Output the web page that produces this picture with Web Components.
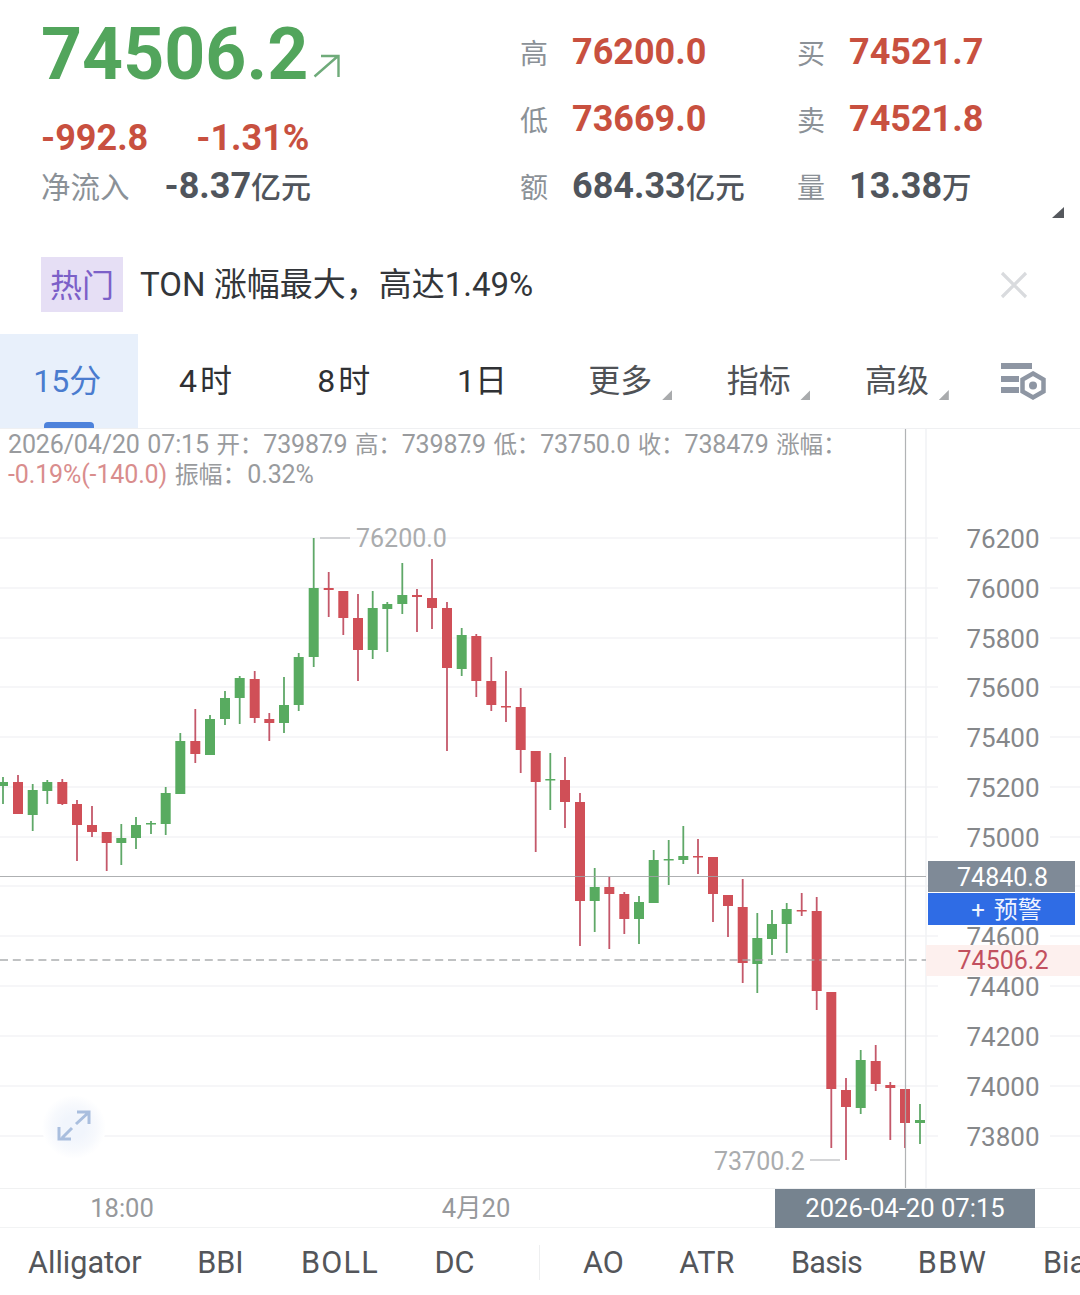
<!DOCTYPE html>
<html lang="zh">
<head>
<meta charset="utf-8">
<title>74506.2</title>
<style>
  html, body { margin: 0; background: #fff; }
  body { width: 1080px; height: 1295px; overflow: hidden; font-family: Roboto, "Noto Sans CJK SC", sans-serif; }
</style>
</head>
<body>
<quote-header></quote-header>
<hot-bar tag="热门">TON 涨幅最大，高达1.49%</hot-bar>
<tab-bar></tab-bar>
<candle-chart></candle-chart>
<time-axis></time-axis>
<indicator-bar></indicator-bar>

<script>
class QuoteStat extends HTMLElement {
  constructor() {
    super();
    this.attachShadow({ mode: 'open' });
  }
  connectedCallback() {
    const unit = this.getAttribute('unit');
    this.shadowRoot.innerHTML = `
      <style>
        :host { display: flex; align-items: center; height: 67px; }
        .label { width: 52px; font-size: 28px; color: #8b9197; }
        .value { font-size: 36px; font-weight: 700; color: var(--tone, #c8503f); }
        .unit { font-size: 29.5px; font-weight: 500; }
        :host([tone="dark"]) { --tone: #50555c; }
      </style>
      <span class="label">${this.getAttribute('label')}</span>
      <span class="value"><slot></slot>${unit ? `<span class="unit">${unit}</span>` : ''}</span>
    `;
  }
}
customElements.define('quote-stat', QuoteStat);

class QuoteHeader extends HTMLElement {
  constructor() {
    super();
    this.attachShadow({ mode: 'open' });
  }
  connectedCallback() {
    this.shadowRoot.innerHTML = `
      <style>
        :host { display: flex; height: 257px; position: relative; }
        .left { width: 520px; padding-left: 41px; box-sizing: border-box; }
        .price { display: flex; align-items: flex-end; height: 106px; box-sizing: border-box; padding-bottom: 16px; }
        .big { font-size: 71.6px; font-weight: 700; line-height: 71px; color: #52a55c; }
        .price svg { margin: 0 0 12px 5px; }
        .change { display: flex; align-items: center; height: 48px; margin-top: 8px; font-size: 36px; font-weight: 700; color: #c8503f; gap: 48px; }
        .flow { display: flex; align-items: center; height: 46px; font-size: 29.5px; color: #8b9197; gap: 35px; }
        .flow b { font-size: 36px; color: #50555c; }
        .flow b span { font-size: 30px; font-weight: 500; }
        .right { display: grid; grid-template-columns: 277px 1fr; align-content: start; padding-top: 18px; }
        .corner { position: absolute; left: 1052px; top: 207px; width: 12px; height: 11px; background: #55585d; clip-path: polygon(100% 0, 100% 100%, 0 100%); }
      </style>
      <div class="left">
        <div class="price">
          <span class="big">74506.2</span>
          <svg width="27" height="24" viewBox="0 0 27 24" fill="none" stroke="#6fab7a" stroke-width="2.4"><path d="M1.5 22.5 25 2M8 2h17.5v21"/></svg>
        </div>
        <div class="change"><span>-992.8</span><span>-1.31%</span></div>
        <div class="flow"><span>净流入</span><b>-8.37<span>亿元</span></b></div>
      </div>
      <div class="right">
        <quote-stat label="高">76200.0</quote-stat>
        <quote-stat label="买">74521.7</quote-stat>
        <quote-stat label="低">73669.0</quote-stat>
        <quote-stat label="卖">74521.8</quote-stat>
        <quote-stat label="额" tone="dark" unit="亿元">684.33</quote-stat>
        <quote-stat label="量" tone="dark" unit="万">13.38</quote-stat>
      </div>
      <i class="corner"></i>
    `;
  }
}
customElements.define('quote-header', QuoteHeader);

class HotBar extends HTMLElement {
  constructor() {
    super();
    this.attachShadow({ mode: 'open' });
  }
  connectedCallback() {
    this.shadowRoot.innerHTML = `
      <style>
        :host { display: flex; height: 77px; padding-left: 41px; box-sizing: border-box; align-items: flex-start; color: #33363a; font-size: 33px; position: relative; }
        .tag { width: 82px; height: 55px; padding-bottom: 4px; box-sizing: border-box; display: flex; align-items: center; justify-content: center; background: #e6dff5; color: #7c60c8; margin-right: 17px; font-size: 32px; }
        .msg { height: 55px; padding-bottom: 5px; box-sizing: border-box; display: flex; align-items: center; white-space: pre; }
        svg { position: absolute; left: 1000px; top: 14px; }
      </style>
      <span class="tag">${this.getAttribute('tag')}</span>
      <span class="msg"><slot></slot></span>
      <svg width="28" height="28" viewBox="0 0 28 28" stroke="#d9dbde" stroke-width="3.2" fill="none"><path d="M2 2l24 24M26 2 2 26"/></svg>
    `;
  }
}
customElements.define('hot-bar', HotBar);

class TabBar extends HTMLElement {
  constructor() {
    super();
    this.attachShadow({ mode: 'open' });
  }
  connectedCallback() {
    const tabs = [['15分'], ['<b>4</b>时'], ['<b>8</b>时'], ['1日'], ['更多', 1], ['指标', 1], ['高级', 1]];
    const items = tabs.map(([name, caret], i) => `
      <div class="tab ${i === 0 ? 'on' : ''} ${caret ? 'more' : ''}"><span>${name}</span>${caret ? '<i></i>' : ''}</div>`).join('');
    this.shadowRoot.innerHTML = `
      <style>
        :host { display: flex; height: 95px; box-sizing: border-box; border-bottom: 1px solid #eff0f2; font-size: 32px; color: #2f3134; }
        .tab { width: 138.3px; height: 94px; display: flex; align-items: center; justify-content: center; position: relative; padding: 0 4px 6px 0; box-sizing: border-box; }
        .tab b { font-weight: 400; margin-right: 3px; }
        .on { background: #e8f0fb; color: #4a7ccf; }
        .on::after { content: ''; position: absolute; left: 44px; bottom: 0; width: 50px; height: 6px; background: #4d82db; border-radius: 4px 4px 0 0; }
        .more { color: #4f5256; }
        .more i { position: absolute; left: 109px; top: 56px; width: 10px; height: 10px; background: #a9abad; clip-path: polygon(100% 0, 100% 100%, 0 100%); }
        svg { margin: 29px 0 0 33px; }
      </style>
      ${items}
      <svg width="46" height="40" viewBox="0 0 46 40" fill="none">
        <path d="M0 3h31M0 16h18M0 27h18" stroke="#8e96a3" stroke-width="6"/>
        <path d="M32 10.5 42.5 16.5v12L32 34.5 21.5 28.5v-12z" stroke="#8e96a3" stroke-width="4.5"/>
        <circle cx="32" cy="22.5" r="4" fill="#8e96a3"/>
      </svg>
    `;
  }
}
customElements.define('tab-bar', TabBar);

// x, wick top, body top, body bottom, wick bottom, up?
const CANDLES = [
  [3,777,782,786,804,1],[18,775,782,814,814,0],[32.7,784,790,815,831,1],[47.3,780,782,791,804,1],
  [62.3,779,782,804,805,0],[77,800,804,825,861,0],[92,806,825,832,837,0],[106.7,832,832,843,871,0],
  [121.3,824,838,843,865,1],[136,817,825,838,849,1],[151,821,823,824.5,834,1],[165.7,787,793,824,835,1],
  [180.3,733,741,794,794,1],[195.3,709,741,754,763,0],[210,715,719,755,755,1],[225,691,698,719,725,1],
  [239.7,676,678,698,724,1],[254.7,671,679,718,723,0],[269.3,713,719,723,741,0],[284,677,705,723,733,1],
  [298.7,653,657,705,711,1],[313.7,538,588,657,667,1],[328.7,572,588,590,617,0],[343.3,591,591,618,635,0],
  [358,594,618,650,681,0],[372.7,591,608,650,659,1],[387.3,602,604,609,652,1],[402.3,563,595,604,614,1],
  [417,589,595,597,632,0],[432,559,598,608,629,0],[447,602,608,668,751,0],[461.7,628,635,669,676,1],
  [476.3,634,636,681,697,0],[491.3,657,681,705,711,0],[506,671,706,707,722,0],[520.7,688,707,750,773,0],
  [535.7,751,751,782,852,0],[550.3,753,779,780,810,1],[565,757,780,802,828,0],[580,793,802,901,946,0],
  [594.7,868,887,901,932,1],[609.3,877,887,894,949,0],[624.3,892,894,919,934,0],[639,896,902,919,944,1],
  [653.7,850,860,903,903,1],[668.7,840,859,860.5,885,1],[683.3,826,856,860,864,1],[698,839,856,857,874,0],
  [713,857,857,894,922,0],[728,895,895,906,937,0],[742.7,879,907,963,983,0],[757.3,913,938,964,993,1],
  [772,910,924,939,955,1],[786.7,903,909,924,953,1],[801.7,893,910,911,916,0],[816.7,897,911,991,1010,0],
  [831.3,992,992,1089,1148,0],[846,1078,1090,1107,1160,0],[860.7,1050,1060,1108,1114,1],[875.7,1045,1061,1084,1091,0],
  [890.3,1082,1085,1088,1140,0],[905,1089,1089,1123,1148,0],[920,1104,1120,1123,1144,1]
];
const AXIS = [[76200,538],[76000,588],[75800,638],[75600,687],[75400,737],[75200,787],[75000,837],[74800,886],[74600,936],[74400,986],[74200,1036],[74000,1086],[73800,1136]];

class CandleChart extends HTMLElement {
  constructor() {
    super();
    this.attachShadow({ mode: 'open' });
  }
  connectedCallback() {
    const grid = AXIS.map(([, y]) => `<path d="M0 ${y}H938M1050 ${y}H1080" stroke="#f3f4f6" stroke-width="1.5"/>`).join('');
    const labels = AXIS.filter(([v]) => v !== 74800).map(([v, y]) => `<text x="1003" y="${y + 10}" text-anchor="middle" class="axis">${v}</text>`).join('');
    const candles = CANDLES.map(([x, wt, bt, bb, wb, up]) => {
      const body = up ? '#58ab60' : '#d04f57';
      const wick = up ? '#5fa868' : '#c4586a';
      return `<path d="M${x} ${wt}V${wb}" stroke="${wick}" stroke-width="1.8"/>
        <rect x="${x - 5}" y="${bt}" width="10" height="${Math.max(bb - bt, 1.5)}" fill="${body}"/>`;
    }).join('');
    this.shadowRoot.innerHTML = `
      <style>
        :host { display: block; height: 759px; position: relative; overflow: hidden; font-size: 25px; color: #999b9e; }
        svg { display: block; }
        .axis { font-size: 26px; fill: #85878a; }
        .mark { font-size: 25px; fill: #aaacae; }
        .legend { position: absolute; left: 8px; top: 1px; width: 900px; line-height: 30px; letter-spacing: -.13px; word-spacing: 1.5px; white-space: nowrap; }
        .legend em { font-style: normal; color: #d98d8d; }
        .legend b { font-weight: 400; font-size: 23.5px; }
        .legend .sub b { font-size: 24px; margin-right: 1px; }
        .legend u { text-decoration: none; letter-spacing: -6px; }
        .tag { position: absolute; display: flex; align-items: center; justify-content: center; font-size: 25px; }
        .cross { left: 928px; top: 432px; width: 147px; height: 31px; padding: 2px 0 0 2px; box-sizing: border-box; background: #7f8a97; color: #fff; }
        .alert { left: 928px; top: 464px; width: 147px; height: 32px; background: #2f6ce5; color: #eef3ff; font-size: 24px; padding: 0 0 4px 10px; box-sizing: border-box; word-spacing: 3px; }
        .last { left: 926px; top: 516px; width: 154px; height: 31px; background: #fdf0ee; color: #c2505f; }
        .expand { position: absolute; left: 42px; top: 666px; width: 64px; height: 64px; border-radius: 50%; background: radial-gradient(closest-side, #f1f5fc 35%, #f7f9fd 70%, #fff 100%); }
      </style>
      <svg width="1080" height="759" viewBox="0 429 1080 759">
        ${grid}
        <path d="M926 429V1188" stroke="#f1f2f4" stroke-width="1.5"/>
        ${candles}
        <path d="M905.5 429V1188" stroke="#a9abad" stroke-opacity=".9" stroke-width="1.2"/>
        <path d="M0 876.5H926" stroke="#a0a2a4" stroke-opacity=".85" stroke-width="1"/>
        <path d="M0 960H926" stroke="#a3a5a7" stroke-opacity=".9" stroke-width="1.5" stroke-dasharray="8 4.8"/>
        <path d="M320 538H350M810 1160H840" stroke="#c6c8ca" stroke-width="1.3"/>
        <text x="356" y="547" class="mark">76200.0</text>
        <text x="714" y="1170" class="mark">73700.2</text>
        ${labels}
      </svg>
      <div class="legend">
        <div>2026/04/20 07:15 <b>开：</b>7398<u>7</u>.9 <b>高：</b>7398<u>7</u>.9 <b>低：</b>73750.0 <b>收：</b>7384<u>7</u>.9 <b>涨幅：</b></div>
        <div class="sub"><em>-0.19%(-140.0)</em> <b>振幅：</b>0.32%</div>
      </div>
      <span class="tag cross">74840.8</span>
      <span class="tag alert">+ 预警</span>
      <span class="tag last">74506.2</span>
      <div class="expand">
        <svg width="64" height="64" viewBox="0 0 64 64" fill="none" stroke="#a9bede" stroke-width="3"><path d="M20 43 30 33M34 29 46 18M35 17h12v12M17 32v12h12"/></svg>
      </div>
    `;
  }
}
customElements.define('candle-chart', CandleChart);

class TimeAxis extends HTMLElement {
  constructor() {
    super();
    this.attachShadow({ mode: 'open' });
  }
  connectedCallback() {
    this.shadowRoot.innerHTML = `
      <style>
        :host { display: block; height: 40px; position: relative; box-sizing: border-box; border-top: 1.5px solid #f0f1f2; border-bottom: 1.5px solid #f2f3f4; font-size: 25.6px; color: #97999c; line-height: 39px; }
        span { position: absolute; top: 0; transform: translateX(-50%); white-space: nowrap; }
        .now { left: 775px; top: 0; width: 260px; height: 39px; transform: none; background: #76838f; color: #fff; text-align: center; }
      </style>
      <span style="left:122px">18:00</span>
      <span style="left:476px">4月20</span>
      <span class="now">2026-04-20 07:15</span>
    `;
  }
}
customElements.define('time-axis', TimeAxis);

class IndicatorBar extends HTMLElement {
  constructor() {
    super();
    this.attachShadow({ mode: 'open' });
  }
  connectedCallback() {
    this.shadowRoot.innerHTML = `
      <style>
        :host { display: flex; align-items: center; height: 67px; padding: 2px 0 0 28px; box-sizing: border-box; overflow: hidden; font-size: 30.6px; color: #54565a; white-space: nowrap; gap: 55.5px; }
        i { width: 1.5px; height: 35px; background: #eeeff0; margin: 0 -13px 0 9px; flex: none; }
        .boll { letter-spacing: 1.2px; margin-left: 2px; }
        .basis { letter-spacing: -.7px; margin-left: 1px; }
        .bbw { letter-spacing: 1.5px; }
      </style>
      <span>Alligator</span><span>BBI</span><span class="boll">BOLL</span><span>DC</span><i></i>
      <span>AO</span><span>ATR</span><span class="basis">Basis</span><span class="bbw">BBW</span><span>Bias</span>
    `;
  }
}
customElements.define('indicator-bar', IndicatorBar);
</script>
</body>
</html>
